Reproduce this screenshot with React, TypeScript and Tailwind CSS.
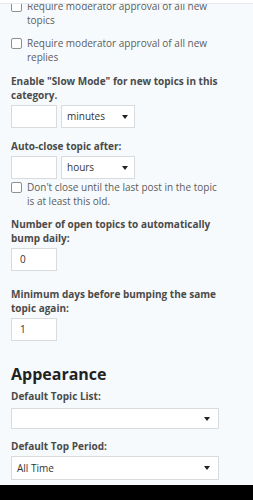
const font = { fontFamily: '"Open Sans", "Noto Sans", sans-serif' };

function Caret() {
  return (
    <svg width="6" height="4" viewBox="0 0 6 4" className="shrink-0">
      <path d="M0 0h6L3 4z" fill="#222" />
    </svg>
  );
}

function Check({ label }: { label: string }) {
  return (
    <label className="flex items-start gap-[5px] text-[10px] leading-[14px] text-[#5c5c5c]">
      <span className="mt-[2px] w-[11px] h-[11px] shrink-0 rounded-[2px] border border-[#8f8f8f] bg-white" />
      <span>{label}</span>
    </label>
  );
}

function Label({ children }: { children: string }) {
  return <div className="text-[10px] leading-[14px] font-bold text-[#4a4a4a]">{children}</div>;
}

function NumBox({ value }: { value?: string }) {
  return (
    <div className="w-[46px] h-[23px] border border-[#d9dcdf] bg-white pl-[8px] flex items-center text-[10px] text-[#333]">
      {value}
    </div>
  );
}

function Select({ value, wide, short }: { value?: string; wide?: boolean; short?: boolean }) {
  return (
    <div
      className={`${wide ? 'w-full pr-[8px]' : 'w-[74px] pr-[6px]'} ${short ? 'h-[21px]' : wide ? 'h-[24px]' : 'h-[23px]'} border border-[#d9dcdf] bg-white flex items-center justify-between pl-[5px] text-[10px] text-[#333]`}
    >
      <span>{value}</span>
      <Caret />
    </div>
  );
}

export default function App() {
  return (
    <div className="relative w-[253px] h-[500px] overflow-hidden bg-[#f7fafd]" style={font}>
      <div className="absolute top-0 left-0 right-0 h-[4px] bg-white border-b border-[#e6eaee] z-10" />

      <div className="pl-[11px] pr-[34px] mt-[-1px] flex flex-col">
        <Check label="Require moderator approval of all new topics" />
        <div className="mt-[9px]">
          <Check label="Require moderator approval of all new replies" />
        </div>

        <div className="mt-[10px]">
          <Label>Enable "Slow Mode" for new topics in this category.</Label>
          <div className="mt-[3px] flex gap-[4px]">
            <NumBox />
            <Select value="minutes" />
          </div>
        </div>

        <div className="mt-[11px]">
          <Label>Auto-close topic after:</Label>
          <div className="mt-[3px] flex gap-[4px]">
            <NumBox />
            <Select value="hours" />
          </div>
        </div>

        <div className="mt-[1px]">
          <Check label="Don't close until the last post in the topic is at least this old." />
        </div>

        <div className="mt-[9px]">
          <Label>Number of open topics to automatically bump daily:</Label>
          <div className="mt-[3px]">
            <NumBox value="0" />
          </div>
        </div>

        <div className="mt-[16px]">
          <Label>Minimum days before bumping the same topic again:</Label>
          <div className="mt-[3px]">
            <NumBox value="1" />
          </div>
        </div>

        <h2 className="mt-[22px] text-[16px] leading-[22px] font-bold text-[#222]">Appearance</h2>

        <div className="mt-[4px]">
          <Label>Default Topic List:</Label>
          <div className="mt-[5px]">
            <Select wide short />
          </div>
        </div>

        <div className="mt-[10px]">
          <Label>Default Top Period:</Label>
          <div className="mt-[3px]">
            <Select wide value="All Time" />
          </div>
        </div>
      </div>

      <div className="absolute bottom-0 left-0 right-0 h-[15px] bg-black" />
    </div>
  );
}
